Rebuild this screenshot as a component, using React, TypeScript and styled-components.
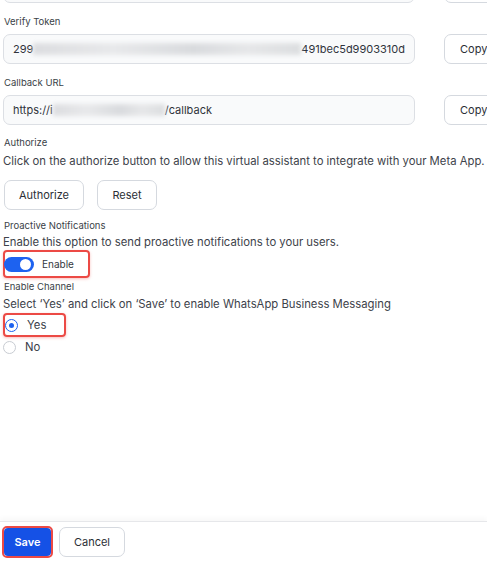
import styled, { createGlobalStyle } from "styled-components"

const GlobalStyle = createGlobalStyle`
    html, body {
        margin: 0;
        padding: 0;
        background: #ffffff;
        font-family: Inter, "Noto Sans", Arial, sans-serif;
        color: #2b2f36;
    }
    * { box-sizing: border-box; }
`

const Page = styled.div`
    width: 487px;
    height: 561px;
    display: flex;
    flex-direction: column;
    overflow: hidden;
`

const Scroll = styled.div`
    flex: 1;
    overflow: hidden;
    padding-left: 3px;
`

const Content = styled.div`
    margin-top: -30px;
    display: flex;
    flex-direction: column;
`

const Field = styled.div`
    display: flex;
    flex-direction: column;
    padding-top: 3px;
    margin-bottom: 9px;
`

const Label = styled.div<{ $gap?: number }>`
    font-size: 9.5px;
    line-height: 14px;
    color: #3a3f47;
    padding-left: 1px;
    margin-bottom: ${p => p.$gap ?? 5}px;
`

const Row = styled.div`
    display: flex;
    gap: 29px;
    align-items: center;
`

const TextBox = styled.div`
    width: 412px;
    height: 30px;
    flex-shrink: 0;
    border: 1px solid #dcdfe4;
    border-radius: 7px;
    background: #f9fafb;
    display: flex;
    align-items: center;
    padding-left: 9px;
    font-size: 11px;
    color: #30343b;
    white-space: nowrap;
    overflow: hidden;
`

const Blur = styled.span<{ $w: number }>`
    display: inline-block;
    width: ${p => p.$w}px;
    height: 12px;
    background: linear-gradient(90deg, #dcdde0, #e8e9eb 30%, #d9dbde 60%, #e6e7e9 80%, #dcdee0);
    filter: blur(2px);
`

const Button = styled.button<{ $w: number }>`
    width: ${p => p.$w}px;
    height: 30px;
    border: 1px solid #d5d9df;
    border-radius: 7px;
    background: #ffffff;
    font-family: Inter, "Noto Sans", Arial, sans-serif;
    font-size: 11px;
    color: #2b2f36;
    padding: 0;
    flex-shrink: 0;
`

const CopyButton = styled(Button)`
    text-align: left;
    padding-left: 15px;
`

const Section = styled.div<{ $top: number }>`
    display: flex;
    flex-direction: column;
    margin-top: ${p => p.$top}px;
`

const Desc = styled.div<{ $gap?: number }>`
    font-size: 11.3px;
    line-height: 16px;
    color: #3d424a;
    white-space: nowrap;
    margin-bottom: ${p => p.$gap ?? 0}px;
`

const Buttons = styled.div`
    display: flex;
    gap: 13px;
    margin-left: 1px;
`

const Highlight = styled.div<{ $w: number; $h: number }>`
    width: ${p => p.$w}px;
    height: ${p => p.$h}px;
    border: 2px solid #ec4a45;
    border-radius: 4px;
    box-shadow: 0 1px 3px rgba(236, 74, 69, 0.35);
    display: flex;
    align-items: center;
`

const Toggle = styled.span`
    position: relative;
    width: 30px;
    height: 15px;
    border-radius: 8px;
    background: #1d62f0;
    margin-left: -1px;
    margin-right: 8px;
`

const Knob = styled.span`
    position: absolute;
    right: 3px;
    top: 2px;
    width: 11px;
    height: 11px;
    border-radius: 50%;
    background: #ffffff;
`

const SmallText = styled.span`
    font-size: 10px;
    color: #33373e;
`

const RadioRow = styled.div`
    display: flex;
    align-items: center;
    gap: 9px;
    height: 20px;
    font-size: 11.3px;
    color: #3b4049;
`

const Radio = styled.span<{ $on?: boolean }>`
    width: 13px;
    height: 13px;
    border-radius: 50%;
    border: 1px solid ${p => (p.$on ? "#1d62f0" : "#c8ccd2")};
    display: flex;
    align-items: center;
    justify-content: center;
    &::after {
        content: "";
        display: ${p => (p.$on ? "block" : "none")};
        width: 5px;
        height: 5px;
        border-radius: 50%;
        background: #1d62f0;
    }
`

const Footer = styled.div`
    height: 40px;
    border-top: 1px solid #e6e7ea;
    box-shadow: 0 -3px 5px rgba(0, 0, 0, 0.03);
    display: flex;
    align-items: center;
    gap: 6px;
    padding: 0 0 0 2px;
`

const SaveWrap = styled.div`
    border: 2px solid #ec4a45;
    border-radius: 5px;
    display: flex;
`

const SaveButton = styled.button`
    width: 47px;
    height: 28px;
    border: none;
    border-radius: 4px;
    background: #1551e6;
    color: #ffffff;
    font-family: Inter, "Noto Sans", Arial, sans-serif;
    font-weight: 600;
    font-size: 11px;
    padding: 0;
`

const App = () => {
    return (
        <Page>
            <GlobalStyle />
            <Scroll>
                <Content>
                    <Field>
                        <Row>
                            <TextBox />
                            <CopyButton $w={60} />
                        </Row>
                    </Field>
                    <Field>
                        <Label>Verify Token</Label>
                        <Row>
                            <TextBox>
                                299<Blur $w={268} />491bec5d9903310d
                            </TextBox>
                            <CopyButton $w={60}>Copy</CopyButton>
                        </Row>
                    </Field>
                    <Field>
                        <Label>Callback URL</Label>
                        <Row>
                            <TextBox>
                                https://i<Blur $w={112} />/callback
                            </TextBox>
                            <CopyButton $w={60}>Copy</CopyButton>
                        </Row>
                    </Field>
                    <Section $top={2}>
                        <Label $gap={3}>Authorize</Label>
                        <Desc $gap={11}>Click on the authorize button to allow this virtual assistant to integrate with your Meta App.</Desc>
                        <Buttons>
                            <Button $w={80}>Authorize</Button>
                            <Button $w={60}>Reset</Button>
                        </Buttons>
                    </Section>
                    <Section $top={9}>
                        <Label $gap={1}>Proactive Notifications</Label>
                        <Desc>Enable this option to send proactive notifications to your users.</Desc>
                        <Highlight $w={87} $h={28}>
                            <Toggle><Knob /></Toggle>
                            <SmallText>Enable</SmallText>
                        </Highlight>
                    </Section>
                    <Section $top={2}>
                        <Label $gap={2}>Enable Channel</Label>
                        <Desc $gap={1}>Select ‘Yes’ and click on ‘Save’ to enable WhatsApp Business Messaging</Desc>
                        <Highlight $w={63} $h={24}>
                            <RadioRow>
                                <Radio $on />
                                Yes
                            </RadioRow>
                        </Highlight>
                        <RadioRow>
                            <Radio />
                            No
                        </RadioRow>
                    </Section>
                </Content>
            </Scroll>
            <Footer>
                <SaveWrap>
                    <SaveButton>Save</SaveButton>
                </SaveWrap>
                <Button $w={66}>Cancel</Button>
            </Footer>
        </Page>
    )
}

export default App
